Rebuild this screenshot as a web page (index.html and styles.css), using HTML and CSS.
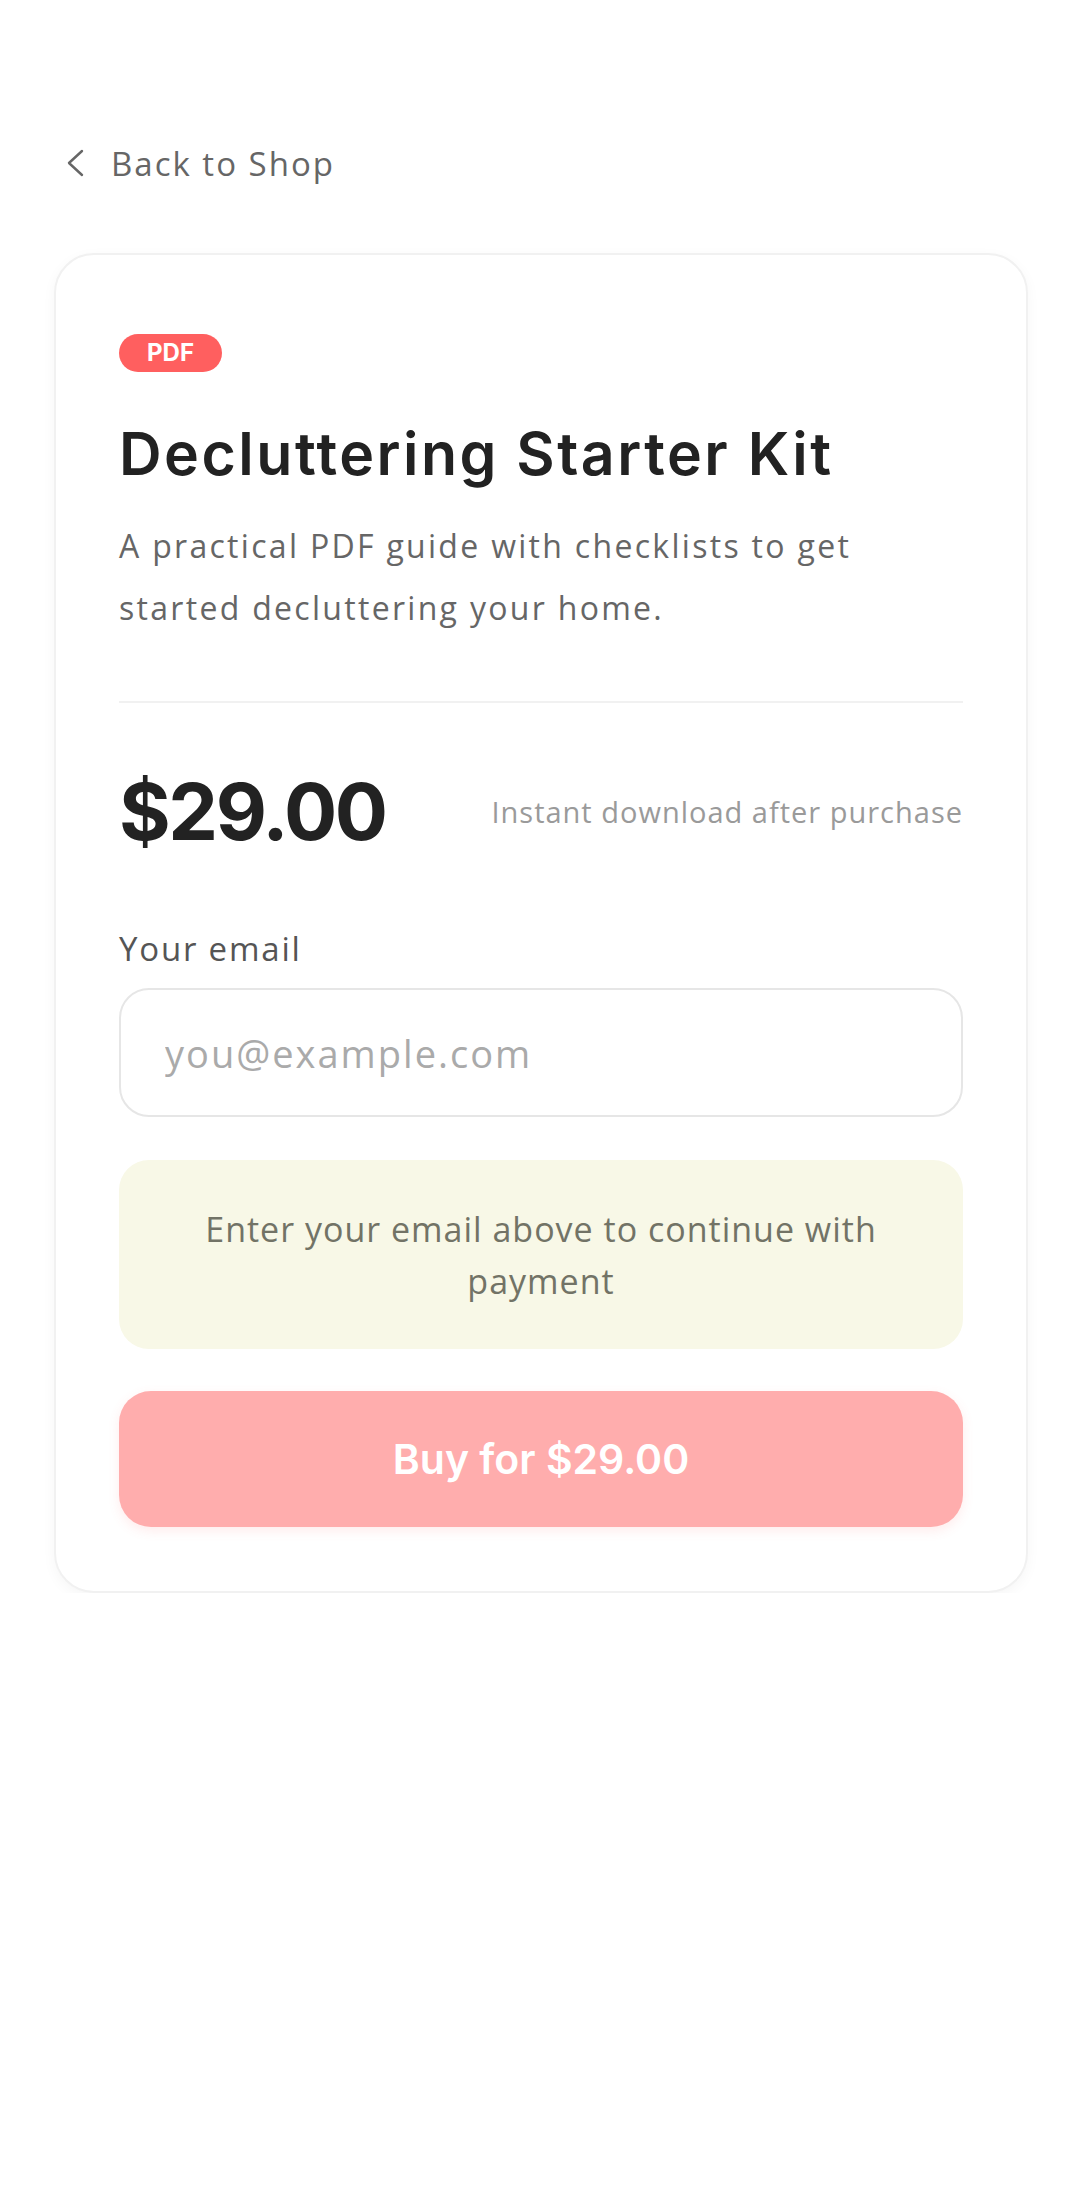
FILE: index.html
```html
<!DOCTYPE html>
<html lang="en">
<head>
<meta charset="utf-8">
<title>Decluttering Starter Kit</title>
<link rel="stylesheet" href="styles.css">
</head>
<body>
<main class="page">
  <a class="back" href="#">
    <svg class="back-icon" width="20" height="28" viewBox="0 0 20 28" aria-hidden="true">
      <path d="M17 2 L4 14 L17 26" fill="none" stroke="#666" stroke-width="2.4" stroke-linecap="round" stroke-linejoin="round"/>
    </svg>
    <span>Back to Shop</span>
  </a>

  <section class="card">
    <span class="badge">PDF</span>
    <h1 class="title">Decluttering Starter Kit</h1>
    <p class="desc">A practical PDF guide with checklists to get started decluttering your home.</p>
    <hr class="divider">
    <div class="price-row">
      <span class="price">$29.00</span>
      <span class="instant">Instant download after purchase</span>
    </div>
    <label class="label" for="email">Your email</label>
    <input class="input" id="email" type="email" placeholder="you@example.com">
    <div class="notice">Enter your email above to continue with payment</div>
    <button class="buy" type="button">Buy for $29.00</button>
  </section>
</main>
</body>
</html>
```

FILE: styles.css
```css
* { box-sizing: border-box; }
html, body { margin: 0; padding: 0; background: #ffffff; }
body { font-family: "Open Sans", "Lato", sans-serif; color: #666; }

.page {
  padding: 140px 54px 0;
  display: flex;
  flex-direction: column;
}

.back {
  display: flex;
  align-items: center;
  gap: 26px;
  height: 46px;
  margin-left: 11px;
  color: #666;
  text-decoration: none;
  font-size: 33px;
  letter-spacing: 2px;
}
.back-icon { display: block; flex: none; }

.card {
  margin-top: 67px;
  border: 2px solid #f1f1f1;
  border-radius: 40px;
  background: #fff;
  box-shadow: 0 4px 14px rgba(0,0,0,0.04);
  padding: 79px 63px 64px;
  display: flex;
  flex-direction: column;
  align-items: stretch;
}

.badge {
  align-self: flex-start;
  height: 38px;
  padding: 0 28px;
  border-radius: 19px;
  background: #ff5f5f;
  color: #fff;
  font-family: "Inter", sans-serif;
  font-weight: 700;
  font-size: 24px;
  line-height: 38px;
}

.title {
  margin: 46px 0 0;
  font-family: "Inter", sans-serif;
  font-weight: 600;
  font-size: 59px;
  line-height: 72px;
  color: #222;
  letter-spacing: 2.5px;
}

.desc {
  margin: 25px 0 0;
  font-size: 32px;
  line-height: 62px;
  color: #666;
  letter-spacing: 2.3px;
}

.divider {
  margin: 62px 0 0;
  border: 0;
  height: 2px;
  background: #f1f1f1;
}

.price-row {
  margin-top: 60px;
  display: flex;
  align-items: center;
  justify-content: space-between;
  height: 96px;
}
.price {
  font-family: "Inter", sans-serif;
  font-weight: 700;
  font-size: 79px;
  color: #222;
  letter-spacing: -2.4px;
}
.instant {
  font-size: 29px;
  color: #9a9a9a;
  letter-spacing: 1px;
}

.label {
  margin-top: 65px;
  font-size: 33px;
  line-height: 50px;
  color: #555;
  letter-spacing: 1.8px;
}

.input {
  margin-top: 14px;
  height: 129px;
  width: 100%;
  border: 2px solid #e6e6e6;
  border-radius: 30px;
  padding: 0 44px;
  font-family: "Open Sans", sans-serif;
  font-size: 38px;
  letter-spacing: 2px;
  color: #333;
  background: #fff;
  outline: none;
}
.input::placeholder { color: #aaa; }

.notice {
  margin-top: 43px;
  background: #f8f8e7;
  border-radius: 30px;
  padding: 43px 40px 42px;
  text-align: center;
  font-size: 34px;
  line-height: 52px;
  color: #727366;
  letter-spacing: 1px;
}

.buy {
  margin-top: 42px;
  height: 136px;
  width: 100%;
  border: 0;
  border-radius: 32px;
  background: #ffadad;
  color: #fff;
  font-family: "Inter", sans-serif;
  font-weight: 600;
  font-size: 41px;
  box-shadow: 0 4px 12px rgba(255,95,95,0.12);
  cursor: pointer;
}
```
